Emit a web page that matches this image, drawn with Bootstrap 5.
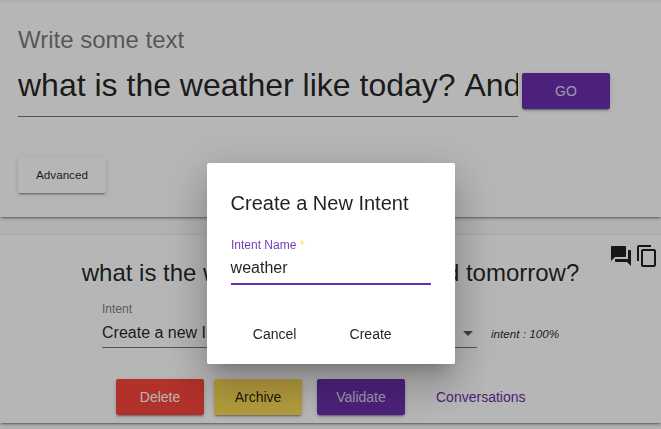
<!DOCTYPE html>
<html lang="en">
<head>
<meta charset="utf-8">
<meta name="viewport" content="width=device-width, initial-scale=1">
<title>Create a New Intent</title>
<link rel="stylesheet" href="https://cdn.jsdelivr.net/npm/bootstrap@5.3.0/dist/css/bootstrap.min.css">
<style>
:root { --violet: #6b2fad; --ink: rgba(0,0,0,.87); --raised: 0 3px 1px -2px rgba(0,0,0,.2), 0 2px 2px 0 rgba(0,0,0,.14), 0 1px 5px 0 rgba(0,0,0,.12); }
body { font-family: "Liberation Sans", Arial, sans-serif; font-size: 14px; font-kerning: none; color: var(--ink); background: #fafafa; height: 429px; }
main { height: 429px; }
.panel { background: #fff; box-shadow: var(--raised); }
.panel-query { height: 215px; margin-top: 2px; padding: 22px 18px 0; }
.panel-result { height: 188px; margin-top: 18px; }
.raised-btn { --bs-btn-font-size: 14px; --bs-btn-border-radius: 2px; --bs-btn-border-width: 0; --bs-btn-padding-x: 0; --bs-btn-padding-y: 0; width: 88px; height: 36px; line-height: 36px; color: var(--ink); box-shadow: var(--raised); }
.violet-btn { background: var(--violet); color: rgba(255,255,255,.8); }
.red-btn { background: #f7463b; color: #fff; }
.gold-btn { background: #fcd957; }
.query-label { font-size: 24px; line-height: 32px; font-kerning: normal; color: rgba(0,0,0,.54); }
.query-field { width: 500px; height: 61px; font-size: 32px; line-height: 58px; border-bottom: 1px solid rgba(0,0,0,.54); }
.go-btn { margin: 17px 0 0 4px; }
.advanced-btn { font-size: 11.67px; margin-top: 40px; }
.sentence { font-size: 24px; line-height: 32px; padding-top: 22px; }
.tools { top: 9px; right: 2.200px; gap: 1.500px; }
.tools svg { width: 24px; height: 24px; fill: var(--ink); }
.intent-row { margin: 13px 0 0 102px; }
.intent-field { width: 375px; height: 46px; border-bottom: 1px solid rgba(0,0,0,.54); }
.intent-field .caption { font-size: 12px; line-height: 14px; color: rgba(0,0,0,.54); }
.choice { font-size: 16px; line-height: 18px; margin-top: 8px; }
.arrow { border: 5px solid transparent; border-top-color: rgba(0,0,0,.66); border-bottom: 0; margin: 1px 4px 0 0; }
.score { font-size: 11.67px; line-height: 16px; margin: 24px 0 0 14px; }
.actions { margin: 31px 0 0 116px; }
.archive { margin-left: 10px; }
.validate { margin-left: 15px; }
.conversations { color: var(--violet); margin-left: 31px; line-height: 36px; }
.scrim { background: rgba(0,0,0,.288); padding: 163px 0 0 206.600px; }
.dialog-box { width: 248px; height: 201px; padding: 24px; border-radius: 2px; background: #fff; box-shadow: 0 11px 15px -7px rgba(0,0,0,.2), 0 24px 38px 3px rgba(0,0,0,.14), 0 9px 46px 8px rgba(0,0,0,.12); }
.dialog-box h2 { font-size: 20px; line-height: 32px; font-kerning: normal; }
.name-label { font-size: 12px; line-height: 14px; color: #763fb9; margin: 19px 0 0 .400px; }
.name-label span { color: #ffd95a; }
.name-field { width: 200px; height: 33px; font-size: 16px; line-height: 18px; padding-top: 7px; border-bottom: 2px solid var(--violet); }
.dialog-actions { margin-top: 31px; gap: 8px; }
.dialog-actions .btn { box-shadow: none; }
</style>
</head>
<body class="overflow-hidden">
<main class="overflow-hidden">
  <section class="panel panel-query">
    <div class="query-label">Write some text</div>
    <div class="d-flex align-items-start">
      <div class="query-field text-nowrap overflow-hidden">what is the weather like today? And tomorrow?</div>
      <button class="btn raised-btn violet-btn go-btn">GO</button>
    </div>
    <button class="btn raised-btn advanced-btn">Advanced</button>
  </section>
  <section class="panel panel-result position-relative">
    <div class="tools position-absolute d-flex">
      <svg viewBox="0 0 24 24"><path d="M21 6h-2v9H6v2c0 .55.45 1 1 1h11l4 4V7c0-.55-.45-1-1-1zm-4 6V3c0-.55-.45-1-1-1H3c-.55 0-1 .45-1 1v14l4-4h10c.55 0 1-.45 1-1z"/></svg>
      <svg viewBox="0 0 24 24"><path d="M16 1H4c-1.100 0-2 .9-2 2v14h2V3h12V1zm3 4H8c-1.100 0-2 .9-2 2v14c0 1.100.9 2 2 2h11c1.100 0 2-.9 2-2V7c0-1.100-.9-2-2-2zm0 16H8V7h11v14z"/></svg>
    </div>
    <div class="sentence text-center">what is the weather like today? And tomorrow?</div>
    <div class="intent-row d-flex">
      <div class="intent-field">
        <div class="caption">Intent</div>
        <div class="choice d-flex align-items-center justify-content-between">Create a new Intent<span class="arrow"></span></div>
      </div>
      <em class="score">intent : 100%</em>
    </div>
    <div class="actions d-flex">
      <button class="btn raised-btn red-btn">Delete</button>
      <button class="btn raised-btn gold-btn archive">Archive</button>
      <button class="btn raised-btn violet-btn validate">Validate</button>
      <a class="conversations text-decoration-none" href="#">Conversations</a>
    </div>
  </section>
</main>
<div class="scrim position-fixed top-0 start-0 w-100 h-100">
  <div class="dialog-box" role="dialog" aria-modal="true">
    <h2 class="fw-normal mb-0">Create a New Intent</h2>
    <div class="name-label">Intent Name <span>*</span></div>
    <div class="name-field">weather</div>
    <div class="dialog-actions d-flex">
      <button class="btn raised-btn">Cancel</button>
      <button class="btn raised-btn">Create</button>
    </div>
  </div>
</div>
<script src="https://cdn.jsdelivr.net/npm/bootstrap@5.3.0/dist/js/bootstrap.bundle.min.js"></script>
</body>
</html>
